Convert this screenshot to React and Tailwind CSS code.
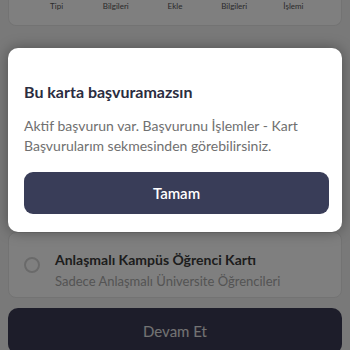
const steps = ["Tipi", "Bilgileri", "Ekle", "Bilgileri", "İşlemi"];

export default function App() {
  return (
    <div
      className="relative w-[350px] h-[350px] overflow-hidden bg-[#f2f2f2]"
      style={{ fontFamily: "Lato, 'Noto Sans', sans-serif" }}
    >
      {/* page behind */}
      <div className="flex flex-col h-full px-2">
        <div className="h-[26px] shrink-0 bg-white border-x border-b border-[#e6e6e6] rounded-b-lg">
          <div className="grid grid-cols-5 px-[18px] pt-[1px]">
            {steps.map((s, i) => (
              <span key={i} className="text-center text-[8px] leading-[10px] text-[#555]">
                {s}
              </span>
            ))}
          </div>
        </div>

        <div className="mt-[206px] h-[66px] shrink-0 bg-white rounded-lg border border-[#e6e6e6] flex items-center gap-[15px] pl-[15px]">
          <div className="w-[16px] h-[16px] rounded-full border-2 border-[#d4d4d4]" />
          <div className="flex flex-col gap-[4px] pt-[10px]">
            <p className="text-[14px] font-bold text-[#3b3b3b] leading-[18px]">
              Anlaşmalı Kampüs Öğrenci Kartı
            </p>
            <p className="text-[13px] text-[#a8a8a8] leading-[16px]">
              Sadece Anlaşmalı Üniversite Öğrencileri
            </p>
          </div>
        </div>

        <button className="mt-[10px] h-[46px] shrink-0 w-full rounded-[10px] bg-[#3b3b55] text-[15px] text-[#e6e6e6]">
          Devam Et
        </button>
      </div>

      {/* overlay */}
      <div className="absolute inset-0 bg-black/50" />

      {/* dialog */}
      <div className="absolute left-2 right-2 top-[48px] bg-white rounded-[10px] shadow-[0_0_14px_rgba(0,0,0,0.35)] pl-[16px] pr-[13px] pt-[34px] pb-[18px]">
        <h2 className="text-[16px] font-bold text-[#2b2d3f] leading-[20px]">
          Bu karta başvuramazsın
        </h2>
        <p className="mt-[14px] text-[14px] text-[#707070] leading-[20px]">
          Aktif başvurun var. Başvurunu İşlemler - Kart Başvurularım sekmesinden görebilirsiniz.
        </p>
        <button className="mt-[16px] w-full h-[42px] rounded-[9px] bg-[#393d58] text-white text-[15px] font-semibold">
          Tamam
        </button>
      </div>
    </div>
  );
}
